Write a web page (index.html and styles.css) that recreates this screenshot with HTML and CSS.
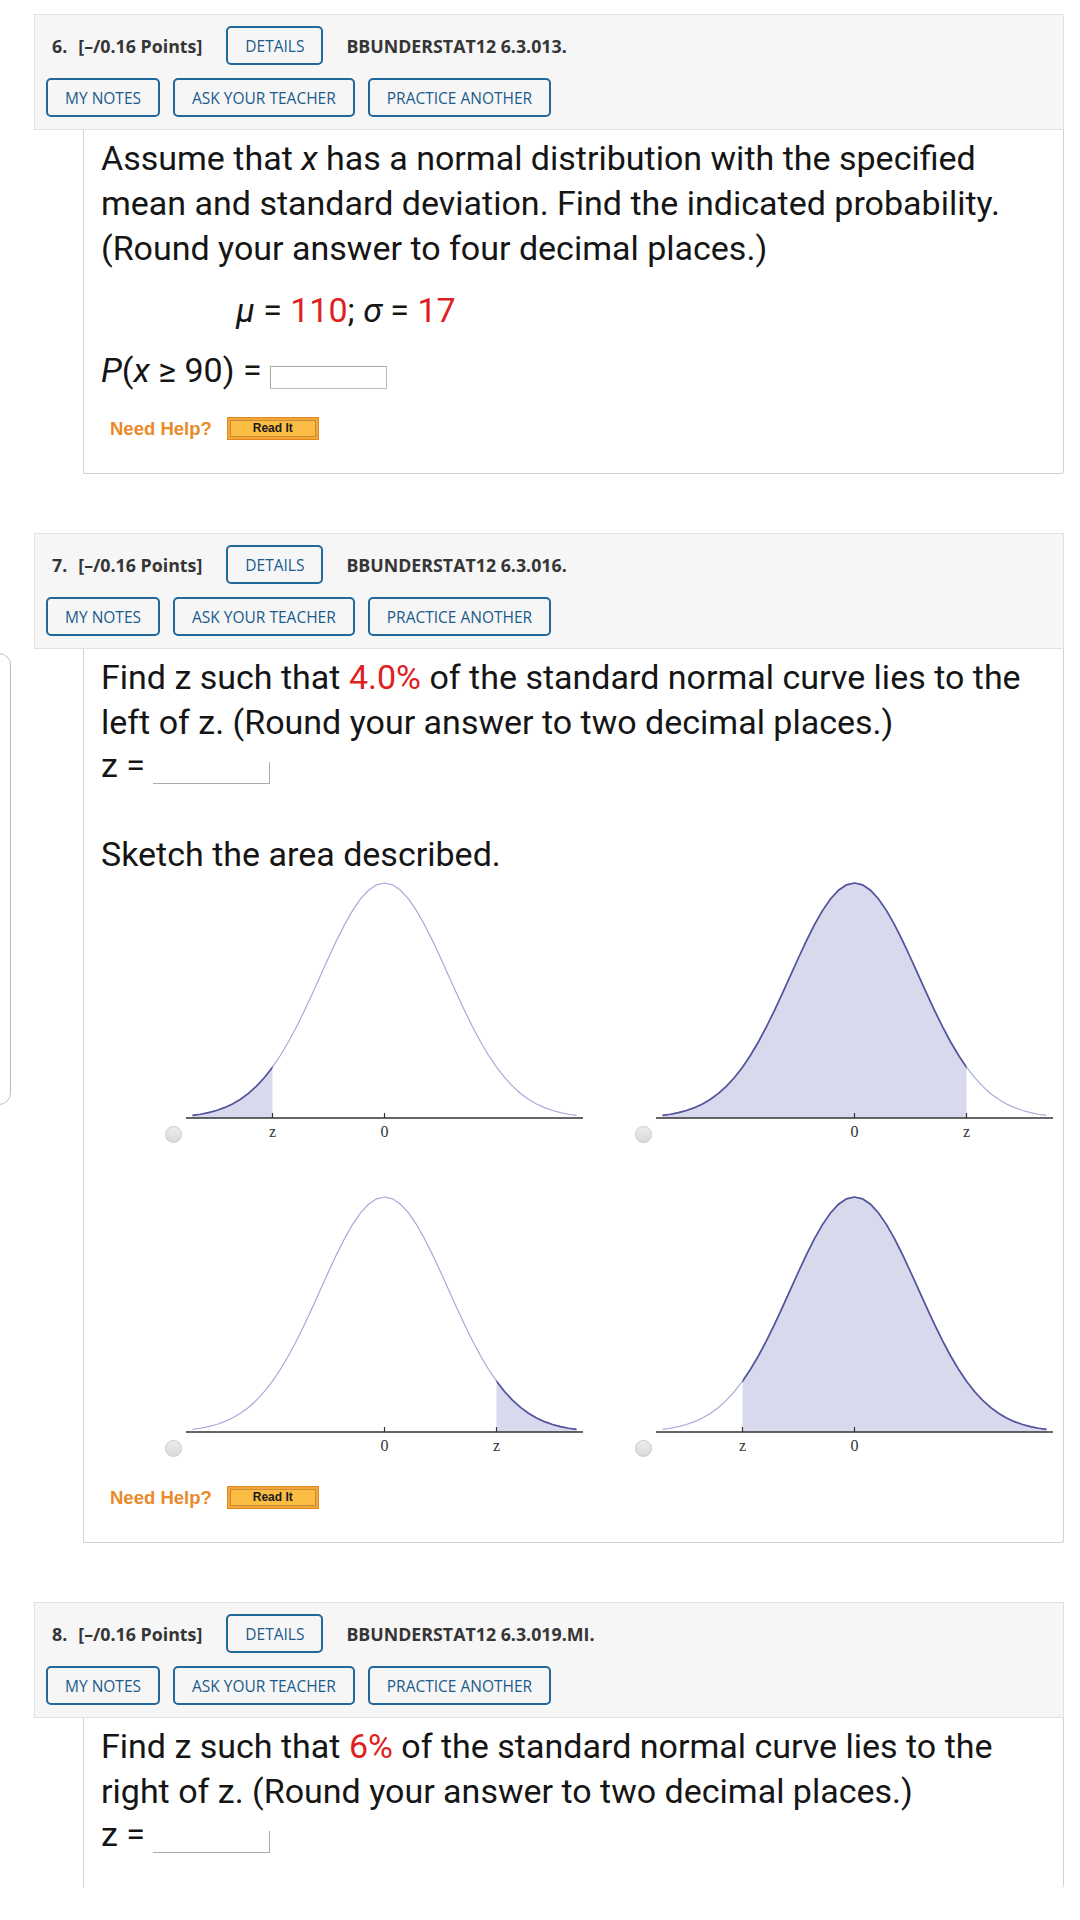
FILE: index.html
```html
<!DOCTYPE html>
<html>
<head>
<meta charset="utf-8">
<link rel="stylesheet" href="styles.css">
</head>
<body>
<div class="page">
  <div class="sidepanel"></div>

  <section class="question">
    <div class="qhead">
      <div class="qrow top">
        <span class="qnum">6.</span><span class="qpts">[–/0.16 Points]</span>
        <span class="btn">DETAILS</span>
        <span class="qcode">BBUNDERSTAT12 6.3.013.</span>
      </div>
      <div class="qrow btnrow">
        <span class="btn">MY NOTES</span><span class="btn">ASK YOUR TEACHER</span><span class="btn">PRACTICE ANOTHER</span>
      </div>
    </div>
    <div class="qbody">
      <p class="txt">Assume that <i>x</i> has a normal distribution with the specified mean and standard deviation. Find the indicated probability. (Round your answer to four decimal places.)</p>
      <p class="txt mu"><i>μ</i> = <span class="red">110</span>; <i>σ</i> = <span class="red">17</span></p>
      <p class="txt pline"><i>P</i>(<i>x</i> ≥ 90) = <span class="inbox"></span></p>
      <div class="help"><span class="needhelp">Need Help?</span><span class="readit">Read It</span></div>
    </div>
  </section>

  <section class="question">
    <div class="qhead">
      <div class="qrow top">
        <span class="qnum">7.</span><span class="qpts">[–/0.16 Points]</span>
        <span class="btn">DETAILS</span>
        <span class="qcode">BBUNDERSTAT12 6.3.016.</span>
      </div>
      <div class="qrow btnrow">
        <span class="btn">MY NOTES</span><span class="btn">ASK YOUR TEACHER</span><span class="btn">PRACTICE ANOTHER</span>
      </div>
    </div>
    <div class="qbody">
      <p class="txt">Find z such that <span class="red">4.0%</span> of the standard normal curve lies to the left of z. (Round your answer to two decimal places.)</p>
      <p class="txt zline">z = <span class="zbox"></span></p>
      <p class="txt sketch">Sketch the area described.</p>
      <div class="opts">
        <div class="opt">
          <span class="radio"></span>
          <svg class="nc" width="397" height="274" viewBox="0 0 397 274">
            <defs>
              <path id="curve" d="M-192,238.39 L-184,237.23 L-176,235.64 L-168,233.5 L-160,230.67 L-152,227 L-144,222.3 L-136,216.42 L-128,209.19 L-120,200.48 L-112,190.18 L-104,178.24 L-96,164.71 L-88,149.68 L-80,133.41 L-72,116.19 L-64,98.47 L-56,80.74 L-48,63.61 L-40,47.69 L-32,33.61 L-24,21.96 L-16,13.23 L-8,7.83 L0,6 L8,7.83 L16,13.23 L24,21.96 L32,33.61 L40,47.69 L48,63.61 L56,80.74 L64,98.47 L72,116.19 L80,133.41 L88,149.68 L96,164.71 L104,178.24 L112,190.18 L120,200.48 L128,209.19 L136,216.42 L144,222.3 L152,227 L160,230.67 L168,233.5 L176,235.64 L184,237.23 L192,238.39"/>
              <path id="area" d="M-192,238.39 L-184,237.23 L-176,235.64 L-168,233.5 L-160,230.67 L-152,227 L-144,222.3 L-136,216.42 L-128,209.19 L-120,200.48 L-112,190.18 L-104,178.24 L-96,164.71 L-88,149.68 L-80,133.41 L-72,116.19 L-64,98.47 L-56,80.74 L-48,63.61 L-40,47.69 L-32,33.61 L-24,21.96 L-16,13.23 L-8,7.83 L0,6 L8,7.83 L16,13.23 L24,21.96 L32,33.61 L40,47.69 L48,63.61 L56,80.74 L64,98.47 L72,116.19 L80,133.41 L88,149.68 L96,164.71 L104,178.24 L112,190.18 L120,200.48 L128,209.19 L136,216.42 L144,222.3 L152,227 L160,230.67 L168,233.5 L176,235.64 L184,237.23 L192,238.39 L192,241 L-192,241 Z"/>
              <clipPath id="cL" clipPathUnits="userSpaceOnUse"><rect x="-200" y="0" width="88" height="250"/></clipPath>
              <clipPath id="cBigR" clipPathUnits="userSpaceOnUse"><rect x="-200" y="0" width="312" height="250"/></clipPath>
              <clipPath id="cR" clipPathUnits="userSpaceOnUse"><rect x="112" y="0" width="100" height="250"/></clipPath>
              <clipPath id="cBigL" clipPathUnits="userSpaceOnUse"><rect x="-112" y="0" width="312" height="250"/></clipPath>
            </defs>
            <g transform="translate(198.5 0)">
              <use href="#area" class="area" clip-path="url(#cL)"/>
              <use href="#curve" class="cv-light"/>
              <use href="#curve" class="cv-dark" clip-path="url(#cL)"/>
            </g>
            <line x1="0" y1="241" x2="397" y2="241" class="axis"/>
            <line x1="86.5" y1="236" x2="86.5" y2="241" class="tick"/>
            <line x1="198.5" y1="236" x2="198.5" y2="241" class="tick"/>
            <text x="86.5" y="260" class="lbl">z</text>
            <text x="198.5" y="260" class="lbl">0</text>
          </svg>
        </div>
        <div class="opt">
          <span class="radio"></span>
          <svg class="nc" width="397" height="274" viewBox="0 0 397 274">
            <g transform="translate(198.5 0)">
              <use href="#area" class="area" clip-path="url(#cBigR)"/>
              <use href="#curve" class="cv-light"/>
              <use href="#curve" class="cv-dark" clip-path="url(#cBigR)"/>
            </g>
            <line x1="0" y1="241" x2="397" y2="241" class="axis"/>
            <line x1="198.5" y1="236" x2="198.5" y2="241" class="tick"/>
            <line x1="310.5" y1="236" x2="310.5" y2="241" class="tick"/>
            <text x="198.5" y="260" class="lbl">0</text>
            <text x="310.5" y="260" class="lbl">z</text>
          </svg>
        </div>
        <div class="opt">
          <span class="radio"></span>
          <svg class="nc" width="397" height="274" viewBox="0 0 397 274">
            <g transform="translate(198.5 0)">
              <use href="#area" class="area" clip-path="url(#cR)"/>
              <use href="#curve" class="cv-light"/>
              <use href="#curve" class="cv-dark" clip-path="url(#cR)"/>
            </g>
            <line x1="0" y1="241" x2="397" y2="241" class="axis"/>
            <line x1="198.5" y1="236" x2="198.5" y2="241" class="tick"/>
            <line x1="310.5" y1="236" x2="310.5" y2="241" class="tick"/>
            <text x="198.5" y="260" class="lbl">0</text>
            <text x="310.5" y="260" class="lbl">z</text>
          </svg>
        </div>
        <div class="opt">
          <span class="radio"></span>
          <svg class="nc" width="397" height="274" viewBox="0 0 397 274">
            <g transform="translate(198.5 0)">
              <use href="#area" class="area" clip-path="url(#cBigL)"/>
              <use href="#curve" class="cv-light"/>
              <use href="#curve" class="cv-dark" clip-path="url(#cBigL)"/>
            </g>
            <line x1="0" y1="241" x2="397" y2="241" class="axis"/>
            <line x1="86.5" y1="236" x2="86.5" y2="241" class="tick"/>
            <line x1="198.5" y1="236" x2="198.5" y2="241" class="tick"/>
            <text x="86.5" y="260" class="lbl">z</text>
            <text x="198.5" y="260" class="lbl">0</text>
          </svg>
        </div>
      </div>
      <div class="help help2"><span class="needhelp">Need Help?</span><span class="readit">Read It</span></div>
    </div>
  </section>

  <section class="question last">
    <div class="qhead">
      <div class="qrow top">
        <span class="qnum">8.</span><span class="qpts">[–/0.16 Points]</span>
        <span class="btn">DETAILS</span>
        <span class="qcode">BBUNDERSTAT12 6.3.019.MI.</span>
      </div>
      <div class="qrow btnrow">
        <span class="btn">MY NOTES</span><span class="btn">ASK YOUR TEACHER</span><span class="btn">PRACTICE ANOTHER</span>
      </div>
    </div>
    <div class="qbody">
      <p class="txt">Find z such that <span class="red">6%</span> of the standard normal curve lies to the right of z. (Round your answer to two decimal places.)</p>
      <p class="txt zline">z = <span class="zbox"></span></p>
    </div>
  </section>
</div>
</body>
</html>
```

FILE: styles.css
```css
body {
  margin: 0;
  background: #ffffff;
  font-family: Roboto, "Noto Sans", sans-serif;
}

.page {
  position: relative;
  width: 1080px;
  height: 1920px;
  overflow: hidden;
  padding-top: 14px;
  box-sizing: border-box;
}

.sidepanel {
  position: absolute;
  left: -30px;
  top: 653px;
  width: 41px;
  height: 452px;
  box-sizing: border-box;
  border: 1px solid #bdbdbd;
  border-radius: 12px;
}

.question {
  margin-left: 34px;
  width: 1030px;
  margin-bottom: 59px;
}

.qhead {
  background: #f6f6f6;
  border: 1px solid #e1e1e1;
  padding: 11px 11px 12px 11px;
  display: flex;
  flex-direction: column;
  gap: 13px;
  font-family: "Open Sans", "Noto Sans", sans-serif;
}

.qrow {
  display: flex;
  align-items: center;
  height: 39px;
}

.qrow.top {
  padding-left: 6px;
}

.qnum,
.qpts,
.qcode {
  font-weight: 700;
  font-size: 17.8px;
  color: #353535;
  white-space: nowrap;
}

.qpts {
  margin-left: 11px;
}

.btn {
  height: 39px;
  box-sizing: border-box;
  border: 2px solid #23689a;
  border-radius: 5px;
  color: #1b5b8b;
  font-family: "Open Sans", "Noto Sans", sans-serif;
  font-size: 15.5px;
  font-weight: 500;
  padding: 0 17px;
  display: inline-flex;
  align-items: center;
  white-space: nowrap;
}

.qrow.top .btn {
  margin-left: 24px;
}

.qcode {
  margin-left: 23px;
}

.btnrow {
  gap: 13px;
}

.qbody {
  margin-left: 49px;
  border: 1px solid #d2d2d2;
  border-top: none;
  border-radius: 0 0 3px 0;
  padding: 6px 18px 33px 17px;
  font-size: 34px;
  line-height: 45px;
  color: #151515;
}

.last .qbody {
  border-bottom: none;
  height: 170px;
  box-sizing: border-box;
  padding-bottom: 0;
}

.txt {
  margin: 0;
}

.red {
  color: #e0201e;
}

.mu {
  margin-top: 17px;
  padding-left: 135px;
}

.pline {
  margin-top: 15px;
}

.inbox {
  display: inline-block;
  width: 117px;
  height: 23px;
  box-sizing: border-box;
  border: 1px solid #bcbcbc;
  border-top-color: #a8a8a8;
  border-left-color: #a8a8a8;
  vertical-align: -7px;
}

.zbox {
  display: inline-block;
  width: 117px;
  height: 22px;
  box-sizing: border-box;
  border-right: 1px solid #acacac;
  border-bottom: 1px solid #acacac;
  vertical-align: -7px;
}

.zline {
  margin-top: -2px;
}

.sketch {
  margin-top: 44px;
}

.opts {
  display: grid;
  grid-template-columns: 418px 418px;
  column-gap: 52px;
  row-gap: 40px;
  margin-left: 64px;
}

.opt {
  display: flex;
  align-items: flex-start;
}

.radio {
  flex: none;
  width: 17px;
  height: 17px;
  box-sizing: border-box;
  margin-top: 249px;
  margin-right: 4px;
  border-radius: 50%;
  border: 1px solid #cacaca;
  background: linear-gradient(#ececec, #d9d9d9);
}

.nc {
  display: block;
  flex: none;
}

.area {
  fill: #d9d9ed;
}

.cv-light {
  fill: none;
  stroke: #a9a9da;
  stroke-width: 1.2;
}

.cv-dark {
  fill: none;
  stroke: #55559c;
  stroke-width: 1.7;
}

.axis {
  stroke: #333333;
  stroke-width: 1.6;
}

.tick {
  stroke: #333333;
  stroke-width: 1.2;
}

.lbl {
  font-family: "Liberation Serif", "DejaVu Serif", serif;
  font-size: 16px;
  fill: #333333;
  text-anchor: middle;
}

.help {
  display: flex;
  align-items: center;
  gap: 15px;
  height: 23px;
  margin-top: 24px;
  padding-left: 9px;
}

.help2 {
  margin-top: 21px;
}

.needhelp {
  font-family: "Liberation Sans", Arial, sans-serif;
  font-weight: 700;
  font-size: 18.5px;
  line-height: 23px;
  color: #e88a2a;
}

.readit {
  width: 92px;
  height: 23px;
  box-sizing: border-box;
  border: 1px solid #e2881f;
  background: #fbbd44;
  box-shadow: inset 0 0 0 2px #f4a63a, inset 0 0 0 3px #c98b33;
  font-family: "Liberation Sans", Arial, sans-serif;
  font-weight: 700;
  font-size: 12px;
  color: #1a1a1a;
  display: flex;
  align-items: center;
  justify-content: center;
}
```
